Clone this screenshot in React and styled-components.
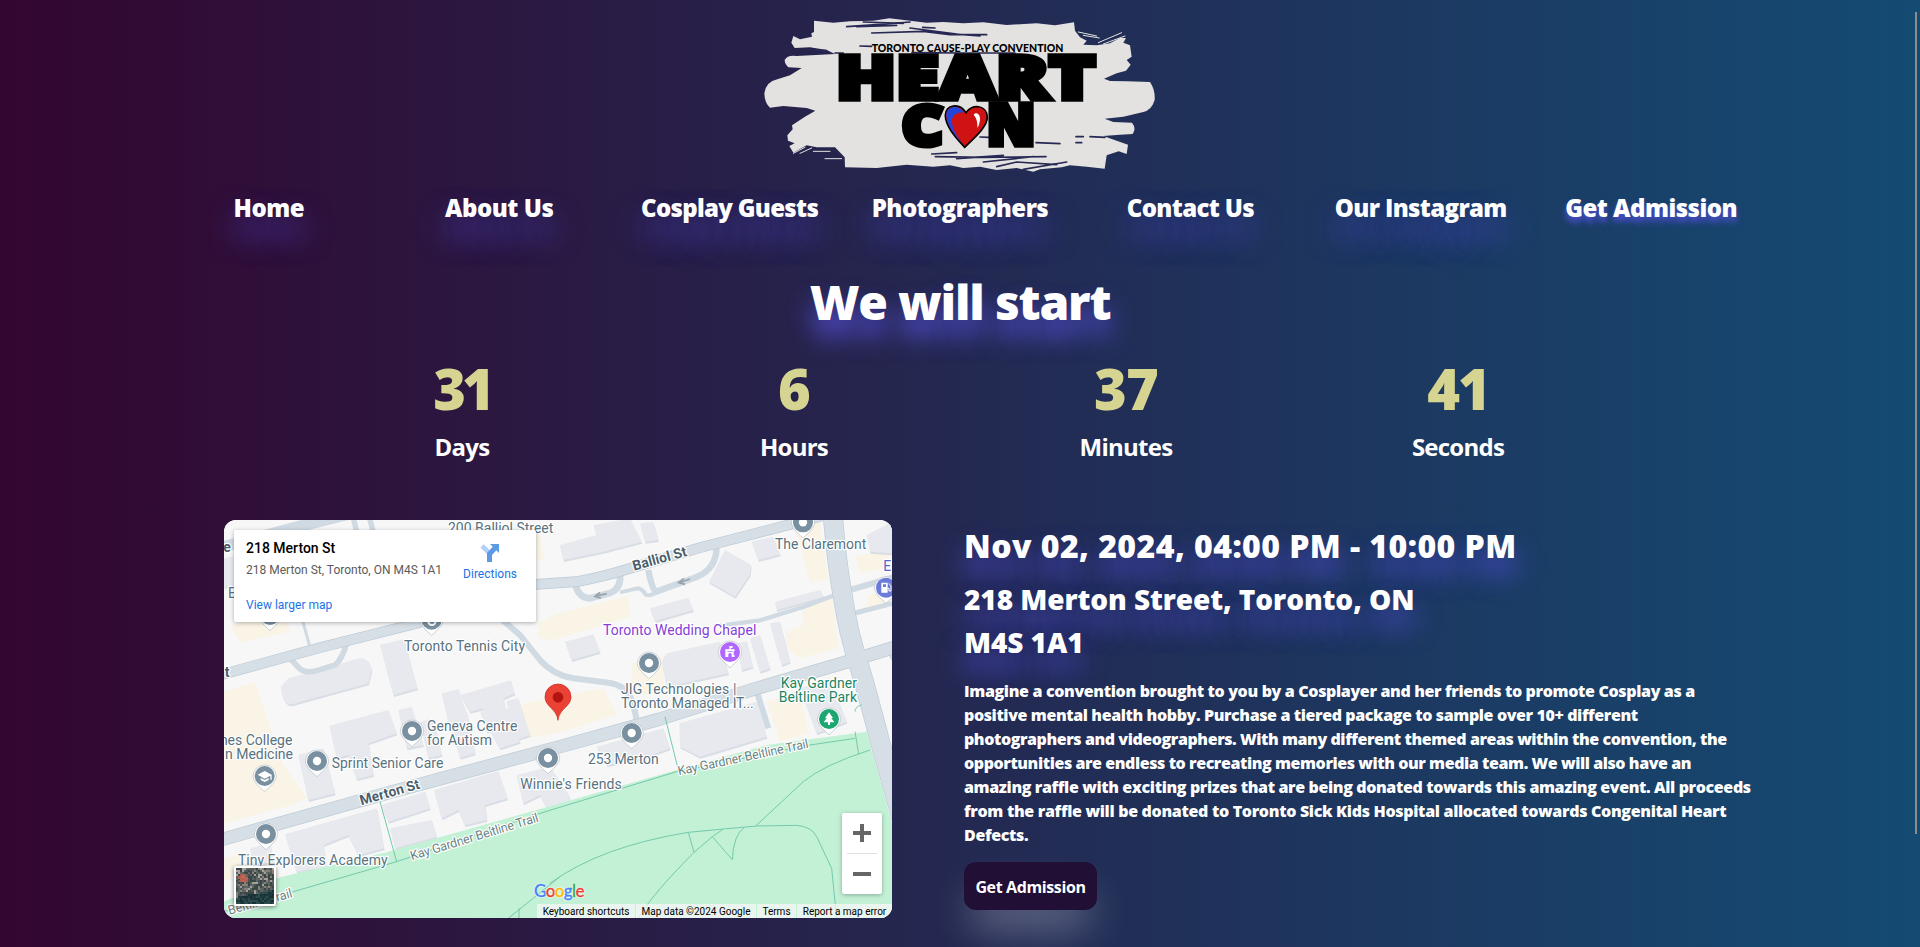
import React from 'react';
import styled, { createGlobalStyle, css } from 'styled-components';

const display = '"Open Sans", "Noto Sans", sans-serif';

const GlobalStyle = createGlobalStyle`
  *, *::before, *::after { box-sizing: border-box; }
  body {
    margin: 0;
    overflow: hidden;
    font-family: ${display};
    color: #fff;
  }
  h1, h2, h3, p, ul { margin: 0; padding: 0; }
`;

const Page = styled.div`
  position: relative;
  height: 947px;
  overflow: hidden;
  padding-top: 10px;
  background: linear-gradient(90deg, #33062f, #144b73);
`;

const ScrollThumb = styled.div`
  position: absolute;
  top: 12px;
  right: 3px;
  width: 2px;
  height: 822px;
  background: #918c8c;
`;

const Header = styled.header`
  display: flex;
  flex-direction: column;
  align-items: center;
`;

const LogoArt = styled.svg`
  display: block;
  width: 420px;
  height: 170px;
`;

const Nav = styled.nav`
  display: grid;
  grid-template-columns: repeat(7, 1fr);
  width: 84%;
  margin-top: 10px;
`;

const NavLink = styled.a`
  color: #fff;
  font-size: 24px;
  font-weight: 800;
  line-height: 36px;
  letter-spacing: ${(p) => p.$track}px;
  text-align: center;
  white-space: nowrap;
  text-shadow: ${(p) =>
    p.$active
      ? '0 5px 6px rgba(86, 80, 225, 0.95)'
      : '0 18px 30px rgba(86, 80, 215, 0.85)'};
`;

const Heading = styled.h1`
  margin-top: 40px;
  font-size: 48px;
  font-weight: 800;
  line-height: 72px;
  letter-spacing: -1.2px;
  text-align: center;
  text-shadow: 0 17px 25px #5650d7;
`;

const Countdown = styled.div`
  display: grid;
  grid-template-columns: repeat(4, 332px);
  justify-content: center;
  margin-top: 8px;
`;

const Unit = styled.div`
  display: flex;
  flex-direction: column;
  align-items: center;
`;

const UnitValue = styled.span`
  color: #d6d491;
  font-size: 56px;
  font-weight: 800;
  line-height: 84px;
  letter-spacing: ${(p) => p.$track}px;
`;

const UnitLabel = styled.span`
  margin-top: -1px;
  font-size: 24px;
  font-weight: 700;
  line-height: 36px;
  letter-spacing: -0.75px;
`;

const Venue = styled.main`
  display: grid;
  grid-template-columns: 668px 1fr;
  column-gap: 72px;
  margin-top: 55px;
  padding-left: 224px;
`;

const MapFrame = styled.section`
  position: relative;
  height: 398px;
  border-radius: 12px;
  overflow: hidden;
  background: #f7f7f7;
  font-family: Roboto, sans-serif;
`;

const MapArt = styled.svg`
  display: block;
  width: 668px;
  height: 398px;
`;

const PlaceCard = styled.div`
  position: absolute;
  top: 10px;
  left: 10px;
  display: flex;
  justify-content: space-between;
  width: 302px;
  height: 92px;
  padding: 9px 19px 0 12px;
  border-radius: 2px;
  background: #fff;
  box-shadow: 0 1px 4px rgba(0, 0, 0, 0.3);
`;

const PlaceText = styled.div`
  display: flex;
  flex-direction: column;
  white-space: nowrap;
`;

const PlaceName = styled.strong`
  color: #000;
  font-size: 14px;
  font-weight: 500;
  line-height: 18px;
`;

const PlaceAddress = styled.span`
  margin-top: 5px;
  color: #5b5b5b;
  font-size: 12px;
  line-height: 16px;
`;

const linkText = css`
  color: #1a73e8;
  font-size: 12px;
  line-height: 16px;
`;

const LargerMapLink = styled.a`
  ${linkText}
  margin-top: 19px;
`;

const Directions = styled.a`
  ${linkText}
  display: flex;
  flex-direction: column;
  align-items: center;
  gap: 3px;
  padding-top: 4px;
`;

const ZoomControl = styled.div`
  position: absolute;
  top: 293px;
  right: 10px;
  display: flex;
  flex-direction: column;
  align-items: center;
  width: 40px;
  height: 81px;
  border-radius: 2px;
  background: #fff;
  box-shadow: 0 1px 4px rgba(0, 0, 0, 0.3);
`;

const ZoomButton = styled.span`
  display: grid;
  place-items: center;
  width: 30px;
  height: 40px;
  & + & { border-top: 1px solid #e0e0e0; }
`;

const SatelliteToggle = styled.svg`
  position: absolute;
  left: 10px;
  bottom: 12px;
  width: 42px;
  height: 40px;
  border: 2px solid #fff;
  border-radius: 2px;
  box-shadow: 0 1px 4px rgba(0, 0, 0, 0.5);
`;

const Google = styled.span`
  position: absolute;
  left: 310px;
  bottom: 16px;
  font: 500 17px/22px Lato, sans-serif;
  letter-spacing: -0.6px;
  -webkit-text-stroke: 0.3px;
  text-shadow: 0 0 2px #fff, 0 0 2px #fff, 0 0 1px #fff;
`;

const Letter = styled.span`
  color: ${(p) => p.$c};
`;

const Attribution = styled.div`
  position: absolute;
  right: 0;
  bottom: 0;
  display: flex;
  gap: 1px;
  color: #000;
  font-size: 10px;
  line-height: 15px;
  white-space: nowrap;
`;

const Credit = styled.span`
  display: flex;
  justify-content: center;
  width: ${(p) => p.$w}px;
  height: 14px;
  background: rgba(245, 245, 245, 0.75);
`;

const Info = styled.section`
  display: flex;
  flex-direction: column;
  align-items: flex-start;
  padding-top: 2px;
`;

const glow = css`
  text-shadow: 0 17px 27px rgba(86, 80, 225, 0.9);
`;

const EventDate = styled.h2`
  ${glow}
  font-size: 32px;
  font-weight: 800;
  line-height: 48px;
  letter-spacing: 0.44px;
  white-space: nowrap;
`;

const Address = styled.h3`
  ${glow}
  width: 500px;
  margin-top: 8px;
  font-size: 28px;
  font-weight: 800;
  line-height: 43px;
  letter-spacing: -0.08px;
`;

const Blurb = styled.p`
  margin-top: 15px;
  font-size: 16px;
  font-weight: 800;
  line-height: 24px;
`;

const BlurbLine = styled.span`
  display: block;
  letter-spacing: ${(p) => p.$track}px;
  white-space: nowrap;
`;

const AdmissionButton = styled.button`
  width: 133px;
  height: 48px;
  margin-top: 15px;
  padding: 2px 0 0;
  border: 0;
  border-radius: 12px;
  background: #220f35;
  box-shadow: 0 25px 40px -8px rgba(255, 255, 255, 0.34);
  color: #fff;
  font: 700 16px/24px ${display};
  letter-spacing: -0.38px;
`;

const links = [
  ['Home', -0.5],
  ['About Us', -0.45],
  ['Cosplay Guests', -0.7],
  ['Photographers', -0.55],
  ['Contact Us', -0.65],
  ['Our Instagram', -0.65],
  ['Get Admission', -0.5],
];

const units = [
  ['31', 'Days', -4],
  ['6', 'Hours', -0.8],
  ['37', 'Minutes', -0.8],
  ['41', 'Seconds', -2],
];

const blurb = [
  ['Imagine a convention brought to you by a Cosplayer and her friends to promote Cosplay as a', -0.345],
  ['positive mental health hobby. Purchase a tiered package to sample over 10+ different', -0.39],
  ['photographers and videographers. With many different themed areas within the convention, the', -0.42],
  ['opportunities are endless to recreating memories with our media team. We will also have an', -0.42],
  ['amazing raffle with exciting prizes that are being donated towards this amazing event. All proceeds', -0.37],
  ['from the raffle will be donated to Toronto Sick Kids Hospital allocated towards Congenital Heart', -0.315],
  ['Defects.', -0.345],
];

function Logo() {
  return (
    <LogoArt viewBox="0 0 1260 510" role="img" aria-label="Toronto Cause-Play Convention Heart Con">
      <path
        fill="#e3e2e0"
        d="M192 32 L250 38 L300 34 L370 32 L418 25 L480 32 L530 38 L580 36 L640 40 L700 37 L770 45 L860 40 L915 46 L972 37
        L975 62 L990 82 L1010 92 L1000 104 L1040 106 L1080 100 L1110 84 L1128 84 L1120 98 L1140 106 L1145 140 L1130 150 L1142 164
        L1128 182 L1100 190 L1062 206 L1080 213 L1130 214 L1200 216 Q1216 240 1214 270 Q1205 300 1180 306 L1120 320 L1064 326
        L1090 336 L1146 338 Q1160 355 1148 372 L1110 374 L1060 378 L1100 392 L1134 404 L1130 432 L1106 424 L1070 436 L1064 476
        L1010 470 L960 466 L935 472 L870 478 L850 485 L800 474 L740 480 L690 470 L640 474 L600 466 L550 470 L470 464 L380 474 L285 472
        L284 442 L255 412 L200 412 L170 406 L130 428 L118 408 L134 400 L114 392 L112 376 L128 358 L126 346 L165 320 L196 302
        L170 294 L100 288 L60 293 Q44 280 43 250 Q48 215 82 208 L120 196 L155 174 L115 172 Q104 162 104 150 Q112 134 140 138 L255 132
        L230 120 L180 112 L134 114 L124 98 L130 78 L150 88 L186 80 L184 70 L192 66 Z"
      />
      <g fill="none" stroke="#272853" strokeWidth="5" strokeLinecap="round">
        <path d="M290 50 L380 44 L480 36 M340 36 L460 40 M320 50 L440 46 M518 52 L555 54 M365 69 L520 64 L600 74 L710 74 M480 54 L620 72 M560 68 L690 78" />
        <path d="M170 119 L230 122 M330 108 L365 109 M255 129 L280 129 M486 128 L640 129 L795 129" />
        <path d="M545 432 L620 428 M556 440 L700 442 L888 440 M620 446 L760 436 M700 456 L850 440 M548 382 L570 382 M690 381 L716 382 M858 398 L930 401 M978 380 L1000 380 M1020 380 L1065 382 M978 398 L995 398 M740 470 L800 456 L920 464 M820 478 L950 456" />
      </g>
      <g fill="none" stroke="#e3e2e0" strokeWidth="3" strokeLinecap="round">
        <path d="M985 66 L1040 78 M1000 76 L1048 84 M1045 98 L1115 68 M1060 102 L1125 78 M130 430 L165 412 M150 430 L185 414 M190 424 L240 424 M225 446 L275 446 M366 374 L415 375" />
      </g>
      <g fill="#000" stroke="#000" strokeLinejoin="miter" fontFamily="Open Sans, sans-serif" fontWeight="800">
        <text x="365" y="125" fontSize="31" strokeWidth="0" textLength="575" lengthAdjust="spacingAndGlyphs" fontFamily="Lato, sans-serif" fontWeight="900">
          TORONTO CAUSE-PLAY CONVENTION
        </text>
        <text x="258" y="267" fontSize="180" strokeWidth="16" textLength="778" lengthAdjust="spacingAndGlyphs">HEART</text>
        <text x="456" y="406" fontSize="166" strokeWidth="18" textLength="122" lengthAdjust="spacingAndGlyphs">C</text>
        <text x="710" y="406" fontSize="168" strokeWidth="16" textLength="146" lengthAdjust="spacingAndGlyphs">N</text>
      </g>
      <path d="M644 412 C620 385 586 350 586 316 C586 284 628 276 648 308 C664 280 712 284 712 322 C712 352 668 388 644 412Z" fill="#cf1212" stroke="#000" strokeWidth="5" />
      <path d="M638 402 C616 378 589 346 589 316 C589 290 624 280 642 308 C618 304 604 318 606 336 C608 362 624 382 638 402Z" fill="#2445dd" />
      <path d="M671 314 C680 303 692 314 690 330 Q688 346 682 354 Q684 330 671 314Z" fill="#fff" />
    </LogoArt>
  );
}

const GREY = '#7890a0';

function Pin({ x, y, color = GREY, children }) {
  return (
    <g transform={`translate(${x} ${y})`}>
      <path d="M-35 2 A35 35 0 1 1 35 2 Q33 20 0 47 Q-33 20 -35 2Z" fill="#fff" stroke="#b5bdc2" strokeWidth="2" />
      <circle r="30" fill={color} />
      {children || <circle r="12.5" fill="#fff" />}
    </g>
  );
}

function Label({ x, y, w, children, fill = '#587280', size = 42, ...rest }) {
  return (
    <text x={x} y={y} textLength={w} fontSize={size} fill={fill} stroke="#fff" strokeWidth="7" strokeLinejoin="round" paintOrder="stroke" {...rest}>
      {children}
    </text>
  );
}

const roads = [
  ['M0 98 L230 36 L400 -6', 34],
  ['M398 0 L412 60', 16],
  ['M446 0 L462 60', 16],
  ['M246 310 L268 390', 9],
  ['M208 428 L240 462 Q262 478 300 464 L345 450 Q365 435 380 385', 17],
  ['M830 300 L900 360 L960 435 Q1000 480 1060 490 L1165 503 Q1215 510 1230 545 Q1245 570 1250 625', 18],
  ['M1065 205 Q1075 250 1110 250 L1170 234 Q1205 220 1200 175', 20],
  ['M1200 232 L1252 220 Q1268 222 1276 238 Q1286 246 1310 232', 12],
  ['M1285 165 Q1295 220 1308 230 L1430 186 Q1490 160 1490 95', 19],
  ['M1500 332 L1620 316 L1750 276 L1845 240', 13],
  ['M1890 225 L2030 184', 18],
  ['M1905 294 L2030 262', 15],
  ['M1612 535 L1645 640', 18],
  ['M2004 400 L2030 445', 18],
  ['M1235 560 L1250 610', 16],
];

const mainRoads = [
  ['M0 480 L300 398 L590 325 L948 208 L1070 200 Q1150 185 1220 163 L1440 98 L1715 27 L1860 -12', 30],
  ['M0 975 L510 832 L1020 695 L1320 612 L1600 523 L1880 441 L2030 395', 38],
  ['M1838 -5 Q1850 140 1866 230 Q1885 360 1920 460 Q1945 545 1980 680 L2050 930', 58],
];

const yellow = [
  'M30 330 L190 290 L210 350 L60 382Z',
  'M12 530 L105 500 L125 560 L190 750 L262 850 L215 870 L12 925Z',
  'M900 40 L955 30 L972 130 L930 145Z',
  'M955 325 L1010 296 L1225 242 L1230 305 L990 378 L955 365Z',
  'M1235 445 L1330 432 L1330 520 L1280 540 L1240 530Z',
  'M900 570 L1000 545 L1150 520 L1190 600 L1010 655 L925 670 L900 610Z',
  'M1725 40 L1800 20 L1825 195 L1770 200Z',
  'M1700 350 L1750 330 L1750 265 L1835 240 L1855 400 L1740 430 L1700 400Z',
  'M1905 125 L2000 105 L2016 155 L1920 175Z',
  'M1940 240 L2016 225 L2016 265 L1945 280Z',
  'M1640 560 L1740 530 L1765 655 L1680 680Z',
  'M12 1030 L90 1010 L100 1060 L12 1100Z',
];

const blocks = [
  'M12 130 L90 115 L110 200 L12 215Z',
  'M205 490 L420 430 Q450 430 455 465 L445 505 L215 568 Q190 570 182 515Z',
  'M480 390 L552 372 L592 520 L520 540Z',
  'M665 535 L715 522 L745 612 L690 640Z',
  'M722 540 L872 496 L884 535 L850 550 L862 620 L800 650 L790 580 L750 590Z',
  'M860 558 L895 550 L930 660 L885 675Z',
  'M328 632 L505 585 L530 655 L445 685 L460 780 L410 792 L385 720 L350 730Z',
  'M535 585 L575 575 L610 690 L560 700Z',
  'M600 620 L640 610 L665 720 L625 730Z',
  'M680 600 L740 590 L765 715 L720 728Z',
  'M780 590 L870 580 L900 680 L840 700Z',
  'M235 720 L310 700 L345 835 L265 855Z',
  'M195 958 L470 880 L492 1000 L415 1020 L385 960 L310 990 L320 1055 L230 1070Z',
  'M485 870 L615 830 L630 880 L505 920Z',
  'M510 940 L635 915 L650 965 L525 1000Z',
  'M642 825 L835 768 L862 850 L795 870 L800 915 L735 930 L715 885 L665 910Z',
  'M890 780 L990 755 L1050 845 L1048 870 L985 885 L960 840 L910 865Z',
  'M1020 90 L1130 60 L1120 30 L1230 10 L1265 80 L1150 110 L1030 135Z',
  'M1260 25 L1300 20 L1315 75 L1275 80Z',
  'M1515 105 L1593 150 L1590 178 L1545 245 L1467 200Z',
  'M1595 80 L1660 65 L1680 118 L1615 135Z',
  'M1290 280 L1405 248 L1420 285 L1305 318Z',
  'M1035 380 L1120 358 L1140 410 L1055 435Z',
  'M1325 440 L1340 415 L1500 380 L1525 475 L1340 515Z',
  'M1550 385 L1580 378 L1598 455 L1565 465Z',
  'M1590 370 L1620 360 L1650 460 L1620 470Z',
  'M1650 325 L1680 320 L1710 440 L1685 450Z',
  'M1665 260 L1800 225 L1812 245 L1670 285Z',
  'M1940 60 L2016 20 L2016 115 L1950 110Z',
  'M1378 625 L1610 560 L1640 665 L1440 725 L1380 695Z',
  'M1130 695 L1330 640 L1350 700 L1250 735 L1160 750Z',
  'M1740 520 L1830 490 L1880 620 L1790 655Z',
  'M90 1000 L150 985 L160 1040 L100 1050Z',
];

function CityMap() {
  return (
    <MapArt viewBox="12 15 2004 1194" fontFamily="Roboto, sans-serif">
      <rect x="12" y="15" width="2004" height="1194" fill="#f7f7f7" />
      <g fill="#faf4e6">{yellow.map((d) => <path key={d} d={d} />)}</g>
      <g fill="#d9dee6" transform="translate(2 6)">{blocks.map((d) => <path key={d} d={d} />)}</g>
      <g fill="#e8e9ee">{blocks.map((d) => <path key={d} d={d} />)}</g>
      <path d="M0 1165 L180 1087 L500 1012 L960 882 L1370 765 L1640 690 L1940 650 L2016 925 L2016 1215 L0 1215Z" fill="#c3f1d5" />
      <g fill="none" stroke="#d0dae3" strokeLinejoin="round">
        {roads.map(([d, w]) => <path key={d} d={d} strokeWidth={w} />)}
      </g>
      <g fill="none" stroke="#bccad5" strokeLinejoin="round">
        {mainRoads.map(([d, w]) => <path key={d} d={d} strokeWidth={w + 2} />)}
      </g>
      <g fill="none" stroke="#d6dfe6" strokeLinejoin="round">
        {mainRoads.map(([d, w]) => <path key={d} d={d} strokeWidth={w - 2} />)}
      </g>
      <g fill="none" stroke="#74c9ad" strokeWidth="3">
        <path d="M12 1190 L220 1130 L530 1040 L960 895 L1370 770 L1770 690 L1905 670" />
        <path d="M480 860 L530 1040 M1335 605 L1375 765 M1905 650 L1916 717 M1905 590 Q1905 575 1925 570" />
        <path d="M990 1105 Q1140 995 1405 952 L1510 942 L1610 933 L1730 931 Q1775 935 1790 965 L1835 1060 L1850 1210" />
        <path d="M1255 1210 Q1290 1145 1422 1012 L1477 965 L1510 942 M1405 952 L1422 1012 M1477 965 L1537 1034 Q1540 960 1573 937 M1607 933 L1750 800 Q1810 750 1950 705" />
        <path d="M865 1210 L1020 1085 M897 1180 L897 1210" />
      </g>
      <g fill="none" stroke="#98a2a8" strokeWidth="5">
        <path d="M1160 236 L1125 244 M1140 232 L1125 244 L1143 250 M1410 192 L1378 203 M1392 190 L1376 203 L1395 208" />
      </g>

      <Pin x="150" y="300" />
      <Pin x="635" y="314"><path d="M-10 3 a11 11 0 1 0 20 -4" fill="none" stroke="#fff" strokeWidth="6" /></Pin>
      <Pin x="1749" y="22" />
      <Pin x="900" y="100" />
      <Pin x="1287" y="444" />
      <Pin x="1530" y="411" color="#b066ff">
        <path fillRule="evenodd" d="M-14 15 V-8 H-2 V-18 H8 V-12 H2 V-8 H14 V-2 H11 V10 H14 V15 H5 V6 Q0 0 -5 6 V15Z M-8 -3 H8 V-1 H-8Z" fill="#fff" />
      </Pin>
      <Pin x="1998" y="218" color="#6b7bd9">
        <path fillRule="evenodd" d="M-14 15 V-15 H5 V15Z M-9 -10 H0 V-2 H-9Z" fill="#fff" />
        <path d="M5 2 H9 V10 H15 V-6 L8 -13" fill="none" stroke="#fff" strokeWidth="3" />
      </Pin>
      <Pin x="1827" y="612" color="#1ba672">
        <path d="M0 -20 L12 -3 H7 L16 10 H3 V18 H-3 V10 H-16 L-7 -3 H-12Z" fill="#fff" />
      </Pin>
      <Pin x="576" y="648" />
      <Pin x="291" y="738" />
      <Pin x="134" y="783">
        <path d="M-21 -4 L0 -15 L21 -4 V11 H17 V-1 L0 8Z M-12 6 L0 12 L12 6 V12 L0 18 L-12 12Z" fill="#fff" />
      </Pin>
      <Pin x="138" y="957" />
      <Pin x="984" y="729" />
      <Pin x="1235" y="654" />

      <path d="M1014 616 C1010 580 975 575 975 546 A39 39 0 0 1 1053 546 C1053 575 1018 580 1014 616Z" fill="#ea4335" stroke="#c5221f" strokeWidth="2" />
      <circle cx="1014" cy="547" r="16" fill="#b31412" />

      <Label x="684" y="53" w="316">200 Balliol Street</Label>
      <Label x="1665" y="102" w="274">The Claremont</Label>
      <Label x="1990" y="167" fill="#5566c9">E</Label>
      <Label x="10" y="110" fontWeight="700" fill="#4a5d6b">e</Label>
      <Label x="14" y="485" fontWeight="700" fill="#4a5d6b">t</Label>
      <Label x="24" y="249">E</Label>
      <Label x="552" y="408" w="363">Toronto Tennis City</Label>
      <Label x="1149" y="360" w="460" fill="#8440d6">Toronto Wedding Chapel</Label>
      <Label x="1203" y="538" w="346">JIG Technologies |</Label>
      <Label x="1203" y="580" w="398">Toronto Managed IT...</Label>
      <Label x="1682" y="519" w="229" fill="#1c8560">Kay Gardner</Label>
      <Label x="1676" y="561" w="235" fill="#1c8560">Beltline Park</Label>
      <Label x="621" y="648" w="271">Geneva Centre</Label>
      <Label x="621" y="690" w="195">for Autism</Label>
      <Label x="335" y="759" w="335">Sprint Senior Care</Label>
      <Label x="217" y="690" textAnchor="end">nes College</Label>
      <Label x="219" y="732" textAnchor="end">n Medicine</Label>
      <Label x="901" y="821" w="304">Winnie's Friends</Label>
      <Label x="1104" y="747" w="212">253 Merton</Label>
      <Label x="54" y="1050" w="449">Tiny Explorers Academy</Label>
      <Label x="0" y="0" w="167" fontWeight="700" fill="#4a5d6b" transform="translate(1242 167) rotate(-15.5)">Balliol St</Label>
      <Label x="0" y="0" w="185" fontWeight="700" fill="#4a5d6b" transform="translate(424 871) rotate(-16)">Merton St</Label>
      <Label x="0" y="0" w="400" size="38" fill="#67837f" transform="translate(575 1036) rotate(-17)">Kay Gardner Beltline Trail</Label>
      <Label x="0" y="0" w="400" size="38" fill="#67837f" transform="translate(1376 781) rotate(-12)">Kay Gardner Beltline Trail</Label>
      <Label x="0" y="0" w="198" size="38" fill="#67837f" transform="translate(28 1199) rotate(-15.5)">Beltline Trail</Label>
    </MapArt>
  );
}

function Satellite() {
  const tones = ['#3b4744', '#5d6663', '#47545a', '#8a8078', '#56605f', '#a5a19a', '#3a4643'];
  const cells = [];
  let seed = 11;
  const next = (n) => {
    seed = (seed * 16807) % 2147483647;
    return seed % n;
  };
  for (let r = 0; r < 18; r += 1) {
    for (let c = 0; c < 19; c += 1) {
      const woods = r > 14 - c * 0.18;
      const fill = woods ? ['#1e3a3f', '#2b4d4c', '#1b3036'][next(3)] : tones[next(7)];
      cells.push(<rect key={`${r}-${c}`} x={c * 2} y={r * 2} width="2" height="2" fill={fill} />);
    }
  }
  return (
    <SatelliteToggle viewBox="0 0 38 36">
      {cells}
      <path d="M4 6 h6 v3 h2 v5 h-8 v-3 h-2 v-3 h2z" fill="#d2604f" opacity="0.8" />
    </SatelliteToggle>
  );
}

const googleLetters = [
  ['G', '#4285f4'],
  ['o', '#ea4335'],
  ['o', '#fbbc04'],
  ['g', '#4285f4'],
  ['l', '#34a853'],
  ['e', '#ea4335'],
];

function VenueMap() {
  return (
    <MapFrame>
      <CityMap />
      <PlaceCard>
        <PlaceText>
          <PlaceName>218 Merton St</PlaceName>
          <PlaceAddress>218 Merton St, Toronto, ON M4S 1A1</PlaceAddress>
          <LargerMapLink>View larger map</LargerMapLink>
        </PlaceText>
        <Directions>
          <svg width="20" height="20" viewBox="0 0 20 20">
            <path d="M2 3 L9.5 10" stroke="#b0d0fa" strokeWidth="4.5" />
            <path d="M9.5 19 V11 L15 5" fill="none" stroke="#5c9ae6" strokeWidth="5" />
            <path d="M10 1 H19 V10Z" fill="#5c9ae6" />
          </svg>
          Directions
        </Directions>
      </PlaceCard>
      <Satellite />
      <Google>
        {googleLetters.map(([ch, c], i) => <Letter key={i} $c={c}>{ch}</Letter>)}
      </Google>
      <ZoomControl>
        <ZoomButton>
          <svg width="18" height="18" viewBox="0 0 18 18"><path d="M7 0h4v7h7v4h-7v7H7v-7H0V7h7z" fill="#666" /></svg>
        </ZoomButton>
        <ZoomButton>
          <svg width="18" height="18" viewBox="0 0 18 18"><path d="M0 7h18v4H0z" fill="#666" /></svg>
        </ZoomButton>
      </ZoomControl>
      <Attribution>
        <Credit $w={98}>Keyboard shortcuts</Credit>
        <Credit $w={120}>Map data ©2024 Google</Credit>
        <Credit $w={39}>Terms</Credit>
        <Credit $w={95}>Report a map error</Credit>
      </Attribution>
    </MapFrame>
  );
}

export default function App() {
  return (
    <>
      <GlobalStyle />
      <Page>
        <Header>
          <Logo />
          <Nav>
            {links.map(([text, track], i) => (
              <NavLink key={text} $track={track} $active={i === 6}>{text}</NavLink>
            ))}
          </Nav>
        </Header>
        <Heading>We will start</Heading>
        <Countdown>
          {units.map(([value, label, track]) => (
            <Unit key={label}>
              <UnitValue $track={track}>{value}</UnitValue>
              <UnitLabel>{label}</UnitLabel>
            </Unit>
          ))}
        </Countdown>
        <Venue>
          <VenueMap />
          <Info>
            <EventDate>Nov 02, 2024, 04:00 PM - 10:00 PM</EventDate>
            <Address>218 Merton Street, Toronto, ON M4S 1A1</Address>
            <Blurb>
              {blurb.map(([line, track]) => <BlurbLine key={line} $track={track}>{line}</BlurbLine>)}
            </Blurb>
            <AdmissionButton>Get Admission</AdmissionButton>
          </Info>
        </Venue>
        <ScrollThumb />
      </Page>
    </>
  );
}
